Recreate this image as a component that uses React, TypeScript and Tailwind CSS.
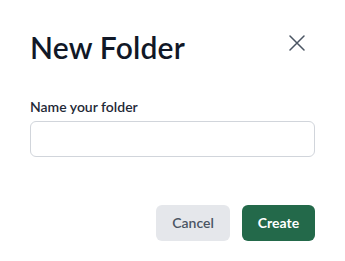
export default function App() {
  return (
    <div className="w-[345px] h-[261px] bg-white px-[30px] pt-[29px]" style={{ fontFamily: 'Lato, "Noto Sans", sans-serif' }}>
      <div className="flex items-start justify-between">
        <h1 className="text-[30px] leading-9 font-semibold tracking-[0.2px] text-[#111827]">New Folder</h1>
        <button className="mt-[6px] mr-[10px] text-[#4b5563]">
          <svg width="16" height="16" viewBox="0 0 16 16" fill="none" stroke="currentColor" strokeWidth="1.5" strokeLinecap="round">
            <path d="M1 1L15 15M15 1L1 15" />
          </svg>
        </button>
      </div>

      <div className="mt-[32px]">
        <label className="block text-sm font-semibold text-[#1f2937]">Name your folder</label>
        <input
          type="text"
          className="mt-[4px] block w-full h-[36px] rounded-md border border-[#d1d5db] px-3 text-sm focus:outline-none"
        />
      </div>

      <div className="mt-[48px] flex justify-end gap-3">
        <button className="h-[36px] w-[74px] rounded-md bg-[#e5e7eb] text-sm font-semibold text-[#4b5563]">
          Cancel
        </button>
        <button className="h-[36px] w-[73px] rounded-md bg-[#23694a] text-sm font-bold text-white">
          Create
        </button>
      </div>
    </div>
  )
}
